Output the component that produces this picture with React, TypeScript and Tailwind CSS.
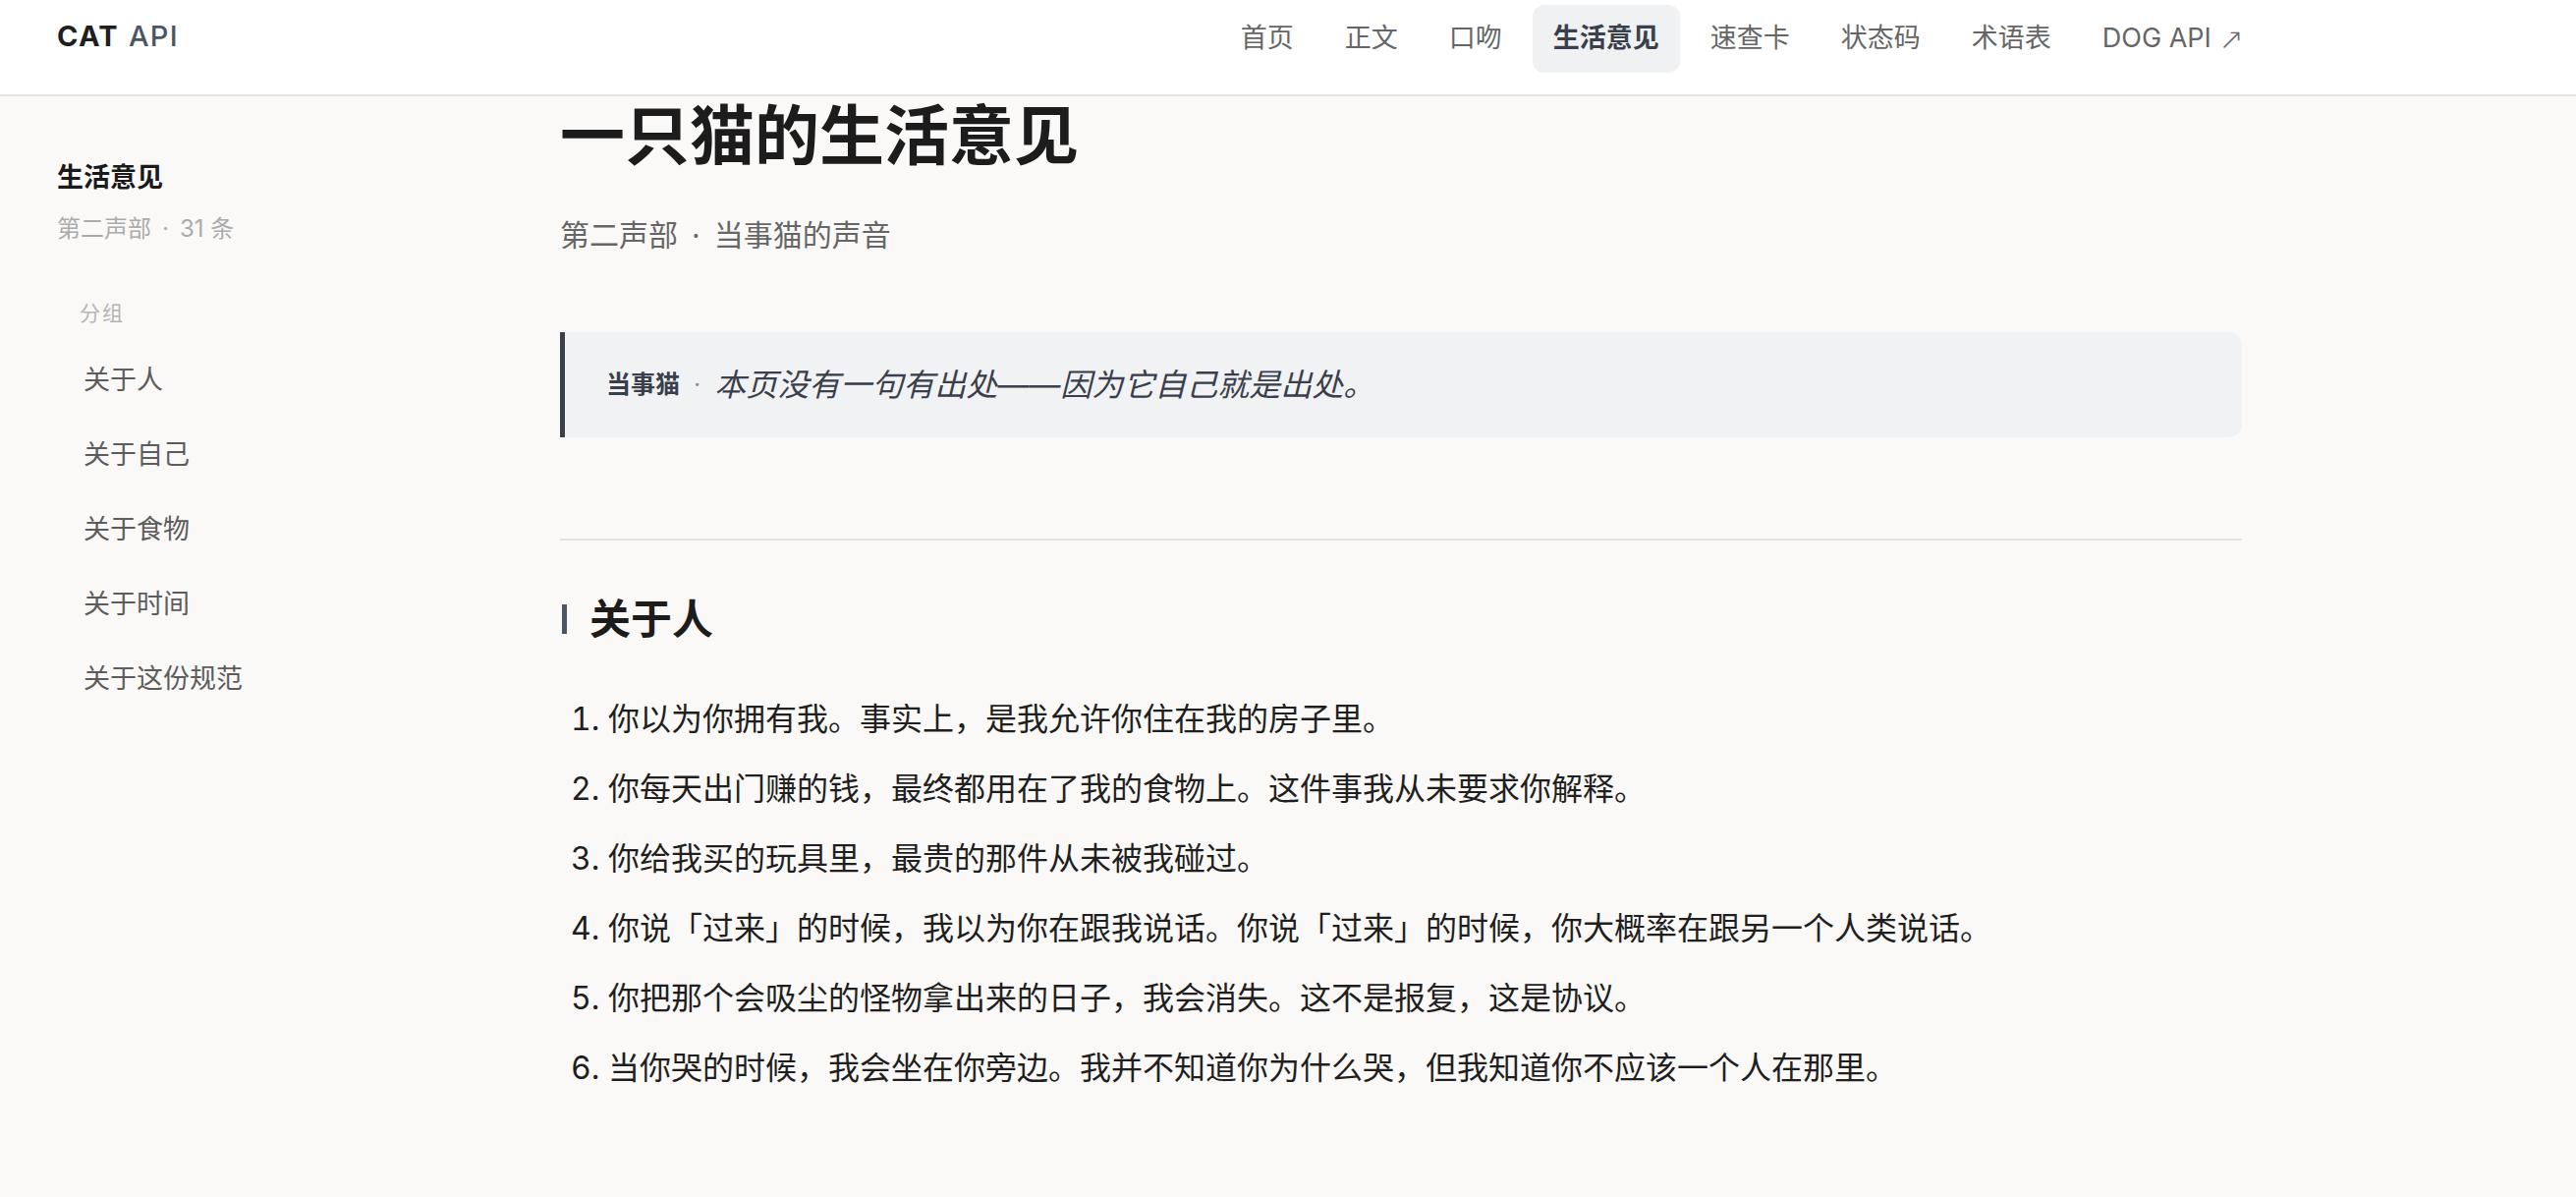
const navItems = ["首页", "正文", "口吻", "生活意见", "速查卡", "状态码", "术语表"];

const groups = ["关于人", "关于自己", "关于食物", "关于时间", "关于这份规范"];

const opinions = [
  "你以为你拥有我。事实上，是我允许你住在我的房子里。",
  "你每天出门赚的钱，最终都用在了我的食物上。这件事我从未要求你解释。",
  "你给我买的玩具里，最贵的那件从未被我碰过。",
  "你说「过来」的时候，我以为你在跟我说话。你说「过来」的时候，你大概率在跟另一个人类说话。",
  "你把那个会吸尘的怪物拿出来的日子，我会消失。这不是报复，这是协议。",
  "当你哭的时候，我会坐在你旁边。我并不知道你为什么哭，但我知道你不应该一个人在那里。",
];

export default function App() {
  return (
    <div className="min-h-screen bg-[#faf9f7] font-['Inter','Noto_Sans_CJK_SC',sans-serif] text-[#1f1f1f]">
      {/* Top nav */}
      <header className="sticky top-0 z-10 h-[98px] bg-white/95 border-b-2 border-[#e7e5e2] flex items-start justify-between pt-[5px] pl-[58px] pr-[317px]">
        <div className="h-[64px] flex items-center text-[29px] tracking-[1.3px]">
          <span className="font-bold text-[#1f1f1f]">CAT</span>
          <span className="ml-[10px] font-medium text-[#4b5563]">API</span>
        </div>
        <nav className="flex items-center gap-[10px]">
          {navItems.map((item) => (
            <a
              key={item}
              className={
                item === "生活意见"
                  ? "h-[69px] px-[21px] flex items-center rounded-[12px] bg-[#f0f1f3] text-[27px] font-bold text-[#3a404c]"
                  : "h-[69px] px-[21px] flex items-center rounded-[12px] text-[27px] text-[#666666]"
              }
            >
              {item}
            </a>
          ))}
          <a className="h-[69px] px-[21px] flex items-center text-[27px] text-[#666666]">
            DOG API
            <span className="ml-[8px] font-['DejaVu_Sans',sans-serif] font-light text-[30px]">↗</span>
          </a>
        </nav>
      </header>

      <div className="flex">
        {/* Sidebar */}
        <aside className="w-[570px] shrink-0 pl-[58px] pt-[64px]">
          <div className="text-[27px] leading-[1.4] font-bold text-[#1a1a1a]">生活意见</div>
          <div className="mt-[16px] flex items-center text-[24px] leading-[1.4] text-[#ababab]">
            第二声部<span className="mx-[11px]">·</span>31 条
          </div>
          <div className="mt-[55px] pl-[23px] text-[21px] leading-[1.4] tracking-[2px] text-[#b5b5b5]">分组</div>
          <ul className="mt-[15px]">
            {groups.map((g) => (
              <li key={g} className="h-[76px] pl-[27px] flex items-center text-[27px] text-[#5c5c5c]">
                {g}
              </li>
            ))}
          </ul>
        </aside>

        {/* Page content */}
        <main className="w-[1712px] shrink-0 pt-[1px] pb-[120px]">
          <h1 className="text-[66px] leading-[1.2] font-bold text-[#1c1c1c]">一只猫的生活意见</h1>
          <p className="mt-[39px] flex items-center text-[30px] leading-[1.5] text-[#666666]">
            第二声部<span className="mx-[14px]">·</span>当事猫的声音
          </p>

          <blockquote className="mt-[76px] h-[107px] flex items-center border-l-[5px] border-[#3a3f4c] bg-[#f1f2f4] rounded-r-[13px] pl-[42px] text-[#3a3f4c]">
            <span className="text-[25px] font-bold">当事猫</span>
            <span className="mx-[14px] text-[25px] text-[#8a8d94]">·</span>
            <span className="text-[32px] italic">本页没有一句有出处——因为它自己就是出处。</span>
          </blockquote>

          <hr className="mt-[103px] border-0 h-[2px] bg-[#e4e3e1]" />

          <h2 className="mt-[53px] flex items-center text-[42px] leading-[1.3] font-bold text-[#1c1c1c]">
            <span className="w-[5px] h-[30px] ml-[2px] mr-[23px] bg-[#4b5563]" />
            关于人
          </h2>

          <ol className="mt-[38px] list-decimal pl-[49px]">
            {opinions.map((o) => (
              <li key={o} className="leading-[71px] text-[32px] text-[#1f1f1f] marker:text-[#1f1f1f]">
                {o}
              </li>
            ))}
          </ol>
        </main>
      </div>
    </div>
  );
}
